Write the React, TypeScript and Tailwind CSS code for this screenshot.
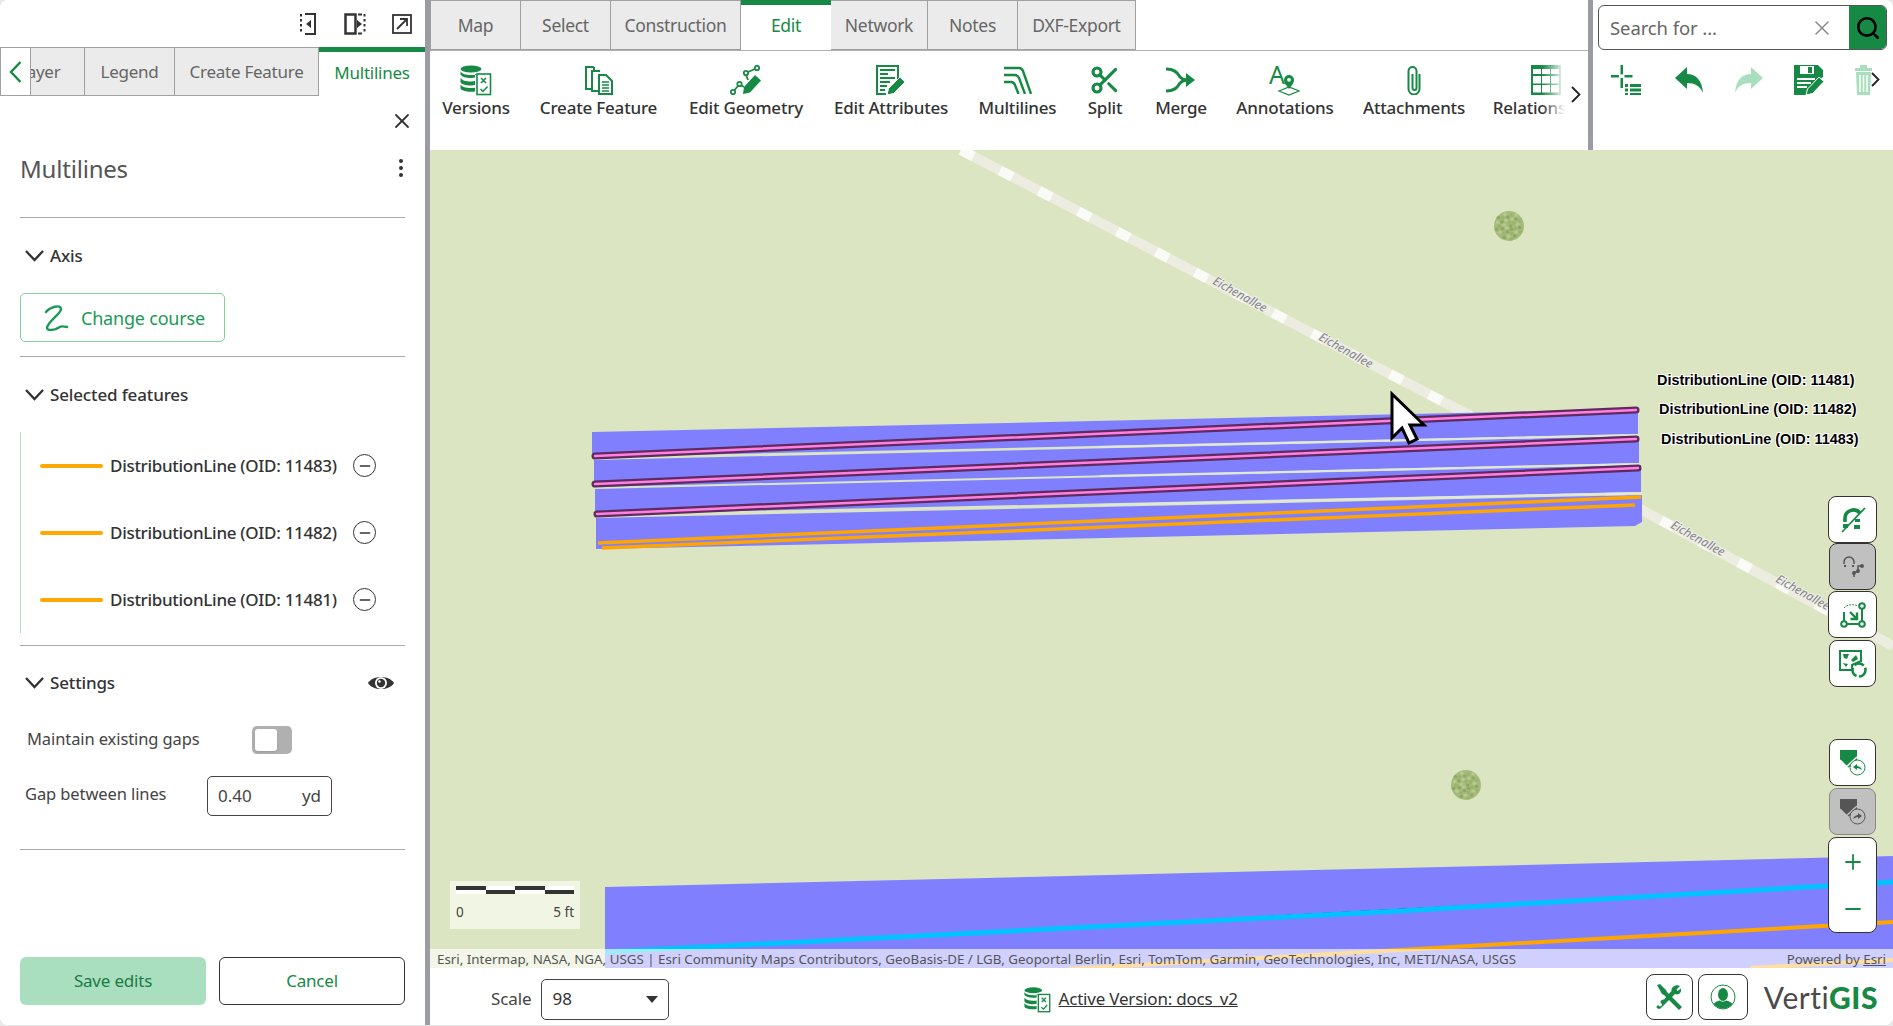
import React from 'react';
import { Scissors, X, Search, Plus, Minus, EllipsisVertical } from 'lucide-react';

const G = '#168a45';

const VersionsIcon = ({ s = 32 }: { s?: number }) => (
  <svg width={s} height={s} viewBox="0 0 32 32">
    <g fill={G}>
      <ellipse cx="11" cy="5" rx="10.5" ry="3.5" />
      <path d="M.5 7.5C2 10 6 11 11 11s7-.6 9-1.8V10H15v3.5c-1 .3-2.5.5-4 .5-5 0-9-1-10.500-3.500zM.5 14c1.500 2.500 5.500 3.500 10.500 3.500 1.500 0 3-.1 4-.4v4c-1 .2-2.500.4-4 .4-5 0-10.500-1.500-10.500-3.500z" />
      <path d="M.5 20.500C2 23 6 24 11 24c1.500 0 3-.1 4-.3v3.700c-1 .2-2.500.3-4 .3-5 0-10.500-1.500-10.500-3.500z" />
    </g>
    <rect x="17" y="10" width="13.500" height="20.500" fill="#fff" stroke={G} strokeWidth="1.600" />
    <path d="M21 14l5 5M26 14l-5 5M20.500 25l2.500 2.500 4.500-5" fill="none" stroke={G} strokeWidth="1.500" />
  </svg>
);

const CreateFeatureIcon = () => (
  <svg width="30" height="30" viewBox="0 0 30 30" fill="none" stroke={G} strokeWidth="2">
    <path d="M9 24H2V2h7l1 1v2" />
    <path d="M15 26H8V6h8" />
    <path d="M15 10h7l6 6v13H15z" fill="#fff" />
    <path d="M18 17h7M18 20h7M18 23h7M18 26h7" strokeWidth="1.600" />
  </svg>
);

const EditGeometryIcon = () => (
  <svg width="32" height="30" viewBox="0 0 32 30" fill="none" stroke={G} strokeWidth="1.800">
    <circle cx="3" cy="27" r="2.200" />
    <circle cx="9.500" cy="19" r="2.200" />
    <circle cx="16" cy="8" r="2.200" />
    <circle cx="27" cy="3" r="2.200" />
    <path d="M4.500 25l3.500-4M11.500 20.500l2.500 1.500M18 7l7-3M16 10l2 5" />
    <path d="M13 29l1-7 11-12 6 5.500-11 12z" fill={G} stroke="none" />
  </svg>
);

const EditAttributesIcon = () => (
  <svg width="30" height="30" viewBox="0 0 30 30" fill="none" stroke={G} strokeWidth="2">
    <path d="M22 14V1H1v28h9" />
    <path d="M4 5h15M4 9h8M4 13h15M4 17h10M4 21h7M4 25h5" strokeWidth="2" />
    <path d="M11 30l1.500-6.500L24 12l5 5-11.500 11.500z" fill={G} stroke="#fff" strokeWidth="1" />
  </svg>
);

const MultilinesIcon = () => (
  <svg width="30" height="28" viewBox="0 0 30 28" fill="none" stroke={G} strokeWidth="2.400">
    <path d="M1 2h15c2 0 3 .6 4 3l8 23" />
    <path d="M1 9h11c2 0 3 .6 4 3l6 16" />
    <path d="M1 16h7c2 0 3 .6 4 3l3.500 9" />
  </svg>
);

const MergeIcon = () => (
  <svg width="32" height="26" viewBox="0 0 32 26" fill="none" stroke={G} strokeWidth="3">
    <path d="M1 2c8 0 11 3 14 8 2 2 3 3 7 3" />
    <path d="M1 24c8 0 11-3 14-8 2-2 3-3 7-3" />
    <path d="M21 6l9 7-9 7z" fill={G} stroke="none" />
  </svg>
);

const AnnotationsIcon = () => (
  <svg width="32" height="32" viewBox="0 0 32 32">
    <text x="0" y="20" fontSize="25" fill={G} fontFamily="Noto Sans, sans-serif">A</text>
    <path d="M20 25c-3-4-5-6-5-9a5 5 0 0 1 10 0c0 3-2 5-5 9z" fill={G} />
    <circle cx="20" cy="15.800" r="1.900" fill="#fff" />
    <path d="M10 27l10-4 10 4-10 4z" fill="none" stroke={G} strokeWidth="1.200" />
  </svg>
);

const PaperclipIcon = () => (
  <svg width="16" height="30" viewBox="0 0 16 30" fill="none" stroke={G} strokeWidth="2">
    <path d="M6.500 9v14a2 2 0 0 0 4 0V6a4 4 0 0 0-8 0v18a5.500 5.500 0 0 0 11 0V9" />
  </svg>
);

const TableIcon = () => (
  <svg width="30" height="30" viewBox="0 0 30 30">
    <rect x="0" y="0" width="30" height="30" fill={G} />
    {[2, 11, 20].map((y) =>
      [2, 11, 20].map((x) => <rect key={`${x}-${y}`} x={x} y={y + (y === 2 ? 2 : 0)} width="8" height={y === 2 ? 5 : 7.500} fill="#fff" />)
    )}
  </svg>
);

const AddListIcon = () => (
  <svg width="30" height="30" viewBox="0 0 30 30" fill={G}>
    <path d="M9.500 0h2.500v9.500H9.500zM9.500 13h2.500v10H9.500zM0 10h8v2.500H0zM13.500 10h8v2.500h-8z" />
    <path d="M14 19h3v3h-3zM19 19h11v3H19zM14 23.500h3v3h-3zM19 23.500h11v3H19zM14 28h3v2h-3zM19 28h11v2H19z" />
  </svg>
);

const ReplyArrow = ({ color, flip }: { color: string; flip?: boolean }) => (
  <svg width="28" height="26" viewBox="0 0 28 26" fill={color} className={flip ? '-scale-x-100' : ''}>
    <path d="M0 11L12 0v7c9 0 15 6 16 19-3-7-8-10-16-10v6z" />
  </svg>
);

const SaveIcon = () => (
  <svg width="30" height="30" viewBox="0 0 30 30">
    <path d="M0 0h24l5 5v7l-3 2-9 12-2 4H0z" fill={G} />
    <rect x="6" y="1" width="14" height="8" fill="#fff" />
    <rect x="14" y="2" width="4" height="6" fill={G} />
    <path d="M3 14h18M3 18h14M3 22h10" stroke="#fff" strokeWidth="1.800" />
    <path d="M12 30l1.500-6L25 12l5 4.500L18.500 28.500z" fill={G} stroke="#fff" strokeWidth="1" />
  </svg>
);

const TrashIcon = () => (
  <svg width="17" height="30" viewBox="0 0 17 30" fill="#a9dfbf">
    <path d="M5 0h7v3h5v3H0V3h5zM1 7h15l-1 23H2z" />
    <path d="M5 10v17M8.500 10v17M12 10v17" stroke="#fff" strokeWidth="1.500" />
  </svg>
);

const ToolsIcon = () => (
  <svg width="26" height="26" viewBox="0 0 26 26" fill={G}>
    <path d="M1 1l3-1 6 6 1 2 15 15-3 3L8 11l-2-1z" />
    <path d="M24 2l-3.500 3.500 1 1.500 3.500-2.500c1 4-2.500 7-6 5.500L5 24c-1.500 1.500-4.500 1-4.500-1.500L2 21l1.500 1.500 2-.5.500-2L4.500 18.500C4 17 6 15.500 8 15.500L15.500 7C15 3 20 0 24 2z" />
  </svg>
);

const PersonIcon = () => (
  <svg width="26" height="26" viewBox="0 0 26 26">
    <circle cx="13" cy="13" r="12" fill="none" stroke={G} strokeWidth="1" />
    <ellipse cx="13" cy="10.500" rx="5" ry="6.500" fill={G} />
    <path d="M3.500 20c2-2.500 4.500-3 6-3.500 2 1.500 4.500 1.500 7 0 1.500.5 4 1 6 3.500-5 6-14 6-19 0z" fill={G} />
  </svg>
);

const Divider = () => <div className="mx-5 h-px shrink-0 bg-[#aaaaaa]" />;

const SectionHead = ({ label, children, className }: { label: string; children?: React.ReactNode; className: string }) => (
  <div className={`flex shrink-0 items-center pl-[25px] pr-[31px] ${className}`}>
    <svg width="19" height="12" viewBox="0 0 19 12" fill="none" stroke="#333" strokeWidth="2.300" className="mr-[6px]">
      <path d="M1 1l8.500 9L18 1" />
    </svg>
    <span className="text-[17px] font-medium tracking-[-0.15px] text-[#333]">{label}</span>
    <div className="ml-auto flex items-center">{children}</div>
  </div>
);

const FeatureRow = ({ oid }: { oid: number }) => (
  <div className="flex h-[67px] items-center">
    <div className="ml-[19px] h-1 w-[63px] rounded-full bg-[#ffa800]" />
    <span className="ml-[7px] w-[243px] whitespace-nowrap text-[17px] font-medium tracking-[-0.3px] text-[#333]">DistributionLine (OID: {oid})</span>
    <div className="flex h-[23px] w-[23px] items-center justify-center rounded-full border border-[#333]">
      <Minus size={16} className="text-[#333]" />
    </div>
  </div>
);

const LeftPanel = () => (
  <div className="flex h-full w-[430px] shrink-0 flex-col border-r-[5px] border-[#9b9ba3] bg-white">
    <div className="flex h-[47px] shrink-0 items-center">
      <svg width="18" height="22" viewBox="0 0 18 22" className="ml-[299px]" fill="none" stroke="#333" strokeWidth="2">
        <path d="M2 1v20" strokeDasharray="2.500 2.500" />
        <path d="M6 1h10v20H6" />
        <path d="M12 7l-5 4 5 4z" fill="#333" stroke="none" />
      </svg>
      <svg width="22" height="22" viewBox="0 0 22 22" className="ml-[27px]" fill="none" stroke="#333" strokeWidth="2.500">
        <rect x="1.500" y="1.500" width="10" height="19" />
        <path d="M13 7l5 4-5 4z" fill="#333" stroke="none" />
        <path d="M20.500 1v20" strokeWidth="2" strokeDasharray="2.500 2.500" />
        <path d="M14 1.500h4M14 20.500h4" strokeWidth="2" />
      </svg>
      <svg width="20" height="20" viewBox="0 0 20 20" className="ml-[26px]" fill="none" stroke="#333" strokeWidth="1.800">
        <rect x="1" y="1" width="18" height="18" />
        <path d="M5 15L14 6M8 5h7v7" />
      </svg>
    </div>
    <div className="flex h-[49px] shrink-0 text-[17px] tracking-[-0.25px] text-[#666]">
      <div className="flex w-[31px] items-center justify-center border border-[#a0a0a0] bg-white">
        <svg width="13" height="22" viewBox="0 0 13 22" fill="none" stroke={G} strokeWidth="2.400">
          <path d="M11.500 1L2 11l9.500 10" />
        </svg>
      </div>
      <div className="flex w-[54px] items-center overflow-hidden border-y border-r border-[#a0a0a0] bg-[#ebebeb] pt-px">
        <span className="-ml-[13px]">Layer</span>
      </div>
      <div className="flex w-[90px] items-center justify-center border-y border-r border-[#a0a0a0] bg-[#ebebeb] pt-px">Legend</div>
      <div className="flex w-[144px] items-center justify-center border-y border-r border-[#a0a0a0] bg-[#ebebeb] pt-px">Create Feature</div>
      <div className="flex w-[106px] items-center justify-center border-t-[5px] border-[#168a45] pb-[3px] text-[#168a45]">Multilines</div>
    </div>
    <div className="flex h-[50px] shrink-0 items-center justify-end pr-[11px]">
      <X size={24} strokeWidth={1.8} className="text-[#333]" />
    </div>
    <div className="flex h-[46px] shrink-0 items-center justify-between pl-[20px] pr-[12px]">
      <span className="text-[24px] tracking-[-0.2px] text-[#555]">Multilines</span>
      <EllipsisVertical size={24} className="-mt-[2px] text-[#333]" />
    </div>
    <div className="h-[25px] shrink-0" />
    <Divider />
    <SectionHead label="Axis" className="h-[75px] pt-px" />
    <div className="ml-5 flex h-[49px] w-[205px] shrink-0 items-center self-start rounded-[5px] border border-[#80d0a0]">
      <svg width="26" height="26" viewBox="0 0 26 26" className="ml-[23px]" fill="none" stroke="#1a9a55" strokeWidth="2.400" strokeLinecap="round">
        <path d="M2 7C6 2 17-1 17 4c0 5-14 13-14 19 0 3 8 2 11 0 3-2 4-2 9-1" />
      </svg>
      <span className="ml-[11px] pt-px text-[18px] tracking-[-0.2px] text-[#1a9a55]">Change course</span>
    </div>
    <div className="h-[14px] shrink-0" />
    <Divider />
    <SectionHead label="Selected features" className="h-[75px]" />
    <div className="ml-5 shrink-0 border-l border-[#b5dfc5]">
      <FeatureRow oid={11483} />
      <FeatureRow oid={11482} />
      <FeatureRow oid={11481} />
    </div>
    <div className="h-[12px] shrink-0" />
    <Divider />
    <SectionHead label="Settings" className="h-[74px]">
      <svg width="26" height="16" viewBox="0 0 26 16">
        <path d="M0 8C5 0 21 0 26 8 21 16 5 16 0 8z" fill="#333" />
        <circle cx="13" cy="8" r="6" fill="#fff" />
        <circle cx="13" cy="8" r="4.200" fill="#333" />
        <circle cx="11.500" cy="6.500" r="1.200" fill="#fff" />
      </svg>
    </SectionHead>
    <div className="mt-[6px] flex h-[28px] shrink-0 items-center">
      <span className="ml-[27px] w-[225px] pb-[2px] text-[16.5px] tracking-[-0.1px] text-[#444]">Maintain existing gaps</span>
      <div className="h-[28px] w-[40px] rounded-[5px] bg-[#b0b0b0] p-[3px]">
        <div className="h-[22px] w-[22px] rounded-[3px] bg-white shadow" />
      </div>
    </div>
    <div className="mt-[22px] flex h-[40px] shrink-0">
      <span className="ml-[25px] w-[182px] text-[16.5px] leading-[36px] tracking-[-0.1px] text-[#444]">Gap between lines</span>
      <div className="flex h-[40px] w-[125px] items-center justify-between rounded-[5px] border border-[#444] px-[10px] text-[17px] text-[#444]">
        <span>0.40</span>
        <span>yd</span>
      </div>
    </div>
    <div className="h-[33px] shrink-0" />
    <Divider />
    <div className="flex-1" />
    <div className="mb-[20px] flex h-[48px] shrink-0 justify-between px-5 text-[17px] tracking-[-0.2px]">
      <div className="flex w-[186px] items-center justify-center rounded-[6px] bg-[#a9dfbf] text-[#1b7a45]">Save edits</div>
      <div className="flex w-[186px] items-center justify-center rounded-[6px] border border-[#333] text-[#168a45]">Cancel</div>
    </div>
  </div>
);

const TopTab = ({ label, w, active }: { label: string; w: string; active?: boolean }) =>
  active ? (
    <div className={`flex items-center justify-center border-t-[5px] border-[#168a45] pb-1 text-[#168a45] ${w}`}>{label}</div>
  ) : (
    <div className={`flex items-center justify-center border-y border-r border-[#a0a0a0] bg-[#ebebeb] text-[#666] ${w}`}>{label}</div>
  );

const RibbonItem = ({ label, cx, children }: { label: string; cx: string; children: React.ReactNode }) => (
  <div className={`flex shrink-0 flex-col items-center ${cx}`}>
    <div className="flex h-[34px] items-center justify-center">{children}</div>
    <span className="-mt-[2px] whitespace-nowrap text-[17px] font-medium tracking-[-0.2px] text-[#333]">{label}</span>
  </div>
);

const TopBar = () => (
  <div className="flex h-[150px] shrink-0">
    <div className="flex w-[1158px] shrink-0 flex-col">
      <div className="flex h-[51px] shrink-0 border-b border-[#b0b0b0] text-[17.5px] tracking-[-0.3px]">
        <div className="flex">
          <div className="w-px bg-[#a0a0a0]" />
          <TopTab label="Map" w="w-[90px]" />
          <TopTab label="Select" w="w-[90px]" />
          <TopTab label="Construction" w="w-[130px]" />
          <TopTab label="Edit" w="w-[90px]" active />
          <TopTab label="Network" w="w-[97px]" />
          <TopTab label="Notes" w="w-[90px]" />
          <TopTab label="DXF-Export" w="w-[118px]" />
        </div>
      </div>
      <div className="relative flex h-[99px] items-start overflow-hidden pt-[12px]">
        <RibbonItem label="Versions" cx="w-[90px] ml-[1px]"><VersionsIcon /></RibbonItem>
        <RibbonItem label="Create Feature" cx="w-[155px]"><CreateFeatureIcon /></RibbonItem>
        <RibbonItem label="Edit Geometry" cx="w-[140px]"><EditGeometryIcon /></RibbonItem>
        <RibbonItem label="Edit Attributes" cx="w-[150px]"><EditAttributesIcon /></RibbonItem>
        <RibbonItem label="Multilines" cx="w-[103px]"><MultilinesIcon /></RibbonItem>
        <RibbonItem label="Split" cx="w-[72px]"><Scissors size={32} color={G} strokeWidth={2.3} /></RibbonItem>
        <RibbonItem label="Merge" cx="w-[80px]"><MergeIcon /></RibbonItem>
        <RibbonItem label="Annotations" cx="w-[128px]"><AnnotationsIcon /></RibbonItem>
        <RibbonItem label="Attachments" cx="w-[130px]"><PaperclipIcon /></RibbonItem>
        <RibbonItem label="Relationships" cx="w-[120px] ml-[7px]"><TableIcon /></RibbonItem>
        <div className="absolute right-0 top-0 flex h-full w-[46px] items-start bg-gradient-to-r from-transparent via-white to-white">
          <svg width="10" height="17" viewBox="0 0 10 17" fill="none" stroke="#222" strokeWidth="1.800" className="ml-[29px] mt-[35px]">
            <path d="M1 1l7.500 7.500L1 16" />
          </svg>
        </div>
      </div>
    </div>
    <div className="w-[5px] shrink-0 bg-[#9b9ba3]" />
    <div className="flex min-w-0 flex-1 flex-col">
      <div className="ml-[5px] mt-[5px] flex h-[45px] w-[289px] overflow-hidden rounded-[6px] border border-[#555]">
        <span className="ml-[11px] self-center text-[18.5px] tracking-[-0.1px] text-[#666]">Search for ...</span>
        <X size={24} strokeWidth={1.5} className="ml-auto mr-[15px] self-center text-[#888]" />
        <div className="flex w-[37px] items-center justify-center bg-[#168a45]">
          <Search size={26} strokeWidth={2.4} className="text-black" />
        </div>
      </div>
      <div className="relative mt-[15px] flex h-[30px] items-center pl-[18px]">
        <AddListIcon />
        <div className="ml-[34px]"><ReplyArrow color={G} /></div>
        <div className="ml-[32px]"><ReplyArrow color="#a9dfbf" flip /></div>
        <div className="ml-[31px]"><SaveIcon /></div>
        <div className="ml-[31px]"><TrashIcon /></div>
        <svg width="9" height="15" viewBox="0 0 9 15" fill="none" stroke="#222" strokeWidth="1.800" className="absolute left-[278px] top-[7px]">
          <path d="M1 1l6.500 6.500L1 14" />
        </svg>
      </div>
    </div>
  </div>
);

const Cursor = () => (
  <path d="M1392 394V438L1402 428 1409 443 1417 439 1410 425H1424Z" fill="#fff" stroke="#000" strokeWidth="3" />
);

const labels = [
  { t: 11481, x: 1657, y: 385 },
  { t: 11482, x: 1659, y: 414 },
  { t: 11483, x: 1661, y: 444 },
];

const roadLabels = [
  { x: 1238, y: 298 },
  { x: 1344, y: 354 },
  { x: 1696, y: 542 },
  { x: 1801, y: 596 },
];

const bands = [
  '592,432 1638,409 1638,434 592,457',
  '594,460 1639,436 1639,463 594,487',
  '595,489 1641,465 1641,492 595,514',
  '596,518 1642,495 1642,522 1635,526 835,544 596,549',
];

const pink = [
  '595,456 1636,410',
  '595,484 1636,439',
  '597,514 1638,468',
];

// fixed dot spread so the tree crown looks mottled
const crownDots = Array.from({ length: 34 }, (_, i) => {
  const a = i * 2.4;
  const r = 13.5 * Math.sqrt((i + 0.5) / 34);
  return { dx: r * Math.cos(a), dy: r * Math.sin(a), fill: ['#8fa764', '#b6c991', '#9cb26f'][i % 3] };
});

const Tree = ({ x, y }: { x: number; y: number }) => (
  <g>
    <circle cx={x} cy={y} r="15" fill="#a5bb7c" />
    {crownDots.map((d, i) => (
      <circle key={i} cx={x + d.dx} cy={y + d.dy} r="1.800" fill={d.fill} />
    ))}
  </g>
);

const ROAD = 'M961 150L1461 411L1642 510L1893 646';

const MapDrawing = () => (
  <svg viewBox="430 150 1463 818" className="absolute inset-0 h-full w-full">
    <rect x="430" y="150" width="1463" height="818" fill="#dce5c1" />
    <path d={ROAD} stroke="#ecece0" strokeWidth="10" fill="none" />
    <path d={ROAD} stroke="#fafaf6" strokeWidth="10" strokeDasharray="14 30" fill="none" />
    <Tree x={1509} y={226} />
    <Tree x={1466} y={785} />
    {roadLabels.map((l) => (
      <text
        key={l.x}
        x={l.x}
        y={l.y}
        transform={`rotate(29 ${l.x} ${l.y})`}
        textAnchor="middle"
        fontSize="12"
        fontStyle="italic"
        fill="#85858c"
        stroke="#eeeee6"
        strokeWidth="2"
        paintOrder="stroke"
        fontFamily="Noto Sans, sans-serif"
      >
        Eichenallee
      </text>
    ))}
    {bands.map((p) => (
      <polygon key={p} points={p} fill="#8080ff" />
    ))}
    <path d="M1100 447L1639 435M1100 476L1641 464M1100 505L1642 493" stroke="#e2e9d2" strokeWidth="2" />
    {pink.map((p) => (
      <g key={p}>
        <polyline points={p} stroke="#5f2a5f" strokeWidth="7" strokeLinecap="round" fill="none" />
        <polyline points={p} stroke="#ff80e0" strokeWidth="2.500" strokeLinecap="round" fill="none" />
      </g>
    ))}
    <path d="M598 543L1641 497M602 548L1635 505" stroke="#ffa500" strokeWidth="3.500" />
    <polygon points="605,887 1400,868 1893,856 1893,968 605,968" fill="#8080ff" />
    <path d="M605 952L1400 911L1893 882" stroke="#00c3ff" strokeWidth="5" />
    <path d="M1068 969L1400 950L1893 922" stroke="#ffa500" strokeWidth="4" />
    <path d="M1750 968L1893 960" stroke="#ffa500" strokeWidth="4" />
    <Cursor />
    {labels.map((l) => (
      <text
        key={l.t}
        x={l.x}
        y={l.y}
        fontSize="14.400"
        fontWeight="700"
        fill="#000"
        stroke="#fff"
        strokeWidth="2"
        paintOrder="stroke"
        fontFamily="Liberation Sans, sans-serif"
      >
        DistributionLine (OID: {l.t})
      </text>
    ))}
  </svg>
);

const MapButton = ({ children, tone, w }: { children?: React.ReactNode; tone?: string; w?: string }) => (
  <div className={`flex h-[47px] items-center justify-center rounded-[8px] border border-[#333] ${tone ?? 'bg-white'} ${w ?? 'w-[49px]'}`}>
    {children}
  </div>
);

const SwipeIcon = ({ dark }: { dark?: boolean }) => {
  const c = dark ? '#555' : G;
  return (
    <svg width="26" height="26" viewBox="0 0 26 26">
      <path d="M0 0h17v10L8 18 0 10z" fill={c} />
      <path d="M0 10l10 10M5 18L17 7" stroke={dark ? '#c0c0c0' : '#fff'} strokeWidth="1.500" />
      <circle cx="17.500" cy="17.500" r="7.500" fill={dark ? '#c0c0c0' : '#fff'} stroke={c} strokeWidth="1" />
      {dark ? <path d="M13 20c1-3 3-4 5-4v-2l4 3-4 3v-2c-2 0-3 1-5 2z" fill={c} /> : <path d="M22 20c-1-3-3-4-5-4v-2l-4 3 4 3v-2c2 0 3 1 5 2z" fill={c} />}
    </svg>
  );
};

const MapButtons = () => (
  <div className="absolute right-[16px] top-[346px] flex w-[49px] flex-col items-center">
    <MapButton>
      <svg width="26" height="26" viewBox="0 0 26 26" fill="none" stroke={G} strokeWidth="3.600">
        <path d="M5 15v-3a8.500 8.500 0 0 1 15-6" />
        <path d="M2 25L25 1" strokeWidth="1.800" />
        <path d="M15 12h5v3h-5zM14 18h6v4h-6zM3 17h5v4H3z" fill={G} stroke="none" />
      </svg>
    </MapButton>
    <MapButton tone="bg-[#c0c0c0]" w="w-[47px]">
      <svg width="22" height="24" viewBox="0 0 22 24" fill="none" stroke="#555" strokeWidth="1.500">
        <path d="M2 9V7a5 5 0 0 1 10 0v2" />
        <path d="M2 11h2M10 11h2" strokeWidth="2" />
        <path d="M12 22v-5h4v-6h4" />
        <circle cx="12" cy="18" r="1.200" fill="#555" />
        <circle cx="16" cy="16" r="1.200" fill="#555" />
        <circle cx="20" cy="11" r="1.200" fill="#555" />
      </svg>
    </MapButton>
    <div className="mt-[1px]">
      <MapButton>
        <svg width="26" height="26" viewBox="0 0 26 26" fill="none" stroke={G} strokeWidth="2">
          <path d="M22 6v15M5 22h15M4 10v10" />
          <path d="M4 6c3-4 10-4 14-2" strokeWidth="0.900" strokeDasharray="2 1" />
          <path d="M10 10l7 7M17 10.500V17h-6.500" strokeWidth="2.400" />
          <circle cx="22" cy="4" r="2.800" fill="#fff" />
          <circle cx="22" cy="22" r="2.800" fill="#fff" />
          <circle cx="4" cy="22" r="2.800" fill="#fff" />
        </svg>
      </MapButton>
    </div>
    <div className="mt-[2px]">
      <MapButton w="w-[47px]">
        <svg width="28" height="28" viewBox="0 0 28 28" fill="none" stroke={G}>
          <path d="M1 1h21v10l-9 4v5H1z" strokeWidth="2" />
          <path d="M4 4h6l-2 5-3-1zM12 10l5-5 2 4-5 3zM4 13l5 1-2 3z" fill={G} stroke="none" />
          <circle cx="20" cy="20" r="6.500" strokeWidth="2.600" strokeDasharray="10 2.500" />
        </svg>
      </MapButton>
    </div>
    <div className="mt-[52px]">
      <MapButton w="w-[47px]"><SwipeIcon /></MapButton>
    </div>
    <div className="mt-[2px]">
      <MapButton tone="bg-[#c0c0c0] border-[#888]" w="w-[47px]"><SwipeIcon dark /></MapButton>
    </div>
    <div className="mt-[2px] flex h-[96px] w-[49px] flex-col items-center justify-around rounded-[8px] border border-[#333] bg-white">
      <Plus size={24} color={G} strokeWidth={1.8} />
      <Minus size={24} color={G} strokeWidth={1.8} />
    </div>
  </div>
);

const ScaleBar = () => (
  <div className="absolute left-[20px] top-[731px] h-[48px] w-[130px] bg-[#f3f6e8]/90 px-[6px] pt-[5px]">
    <div className="grid h-[8px] grid-cols-4 grid-rows-2">
      <div className="bg-[#333]" />
      <div className="bg-white" />
      <div className="bg-[#333]" />
      <div className="bg-white" />
      <div className="bg-white" />
      <div className="bg-[#333]" />
      <div className="bg-white" />
      <div className="bg-[#333]" />
    </div>
    <div className="mt-[9px] flex justify-between text-[13.5px] leading-[18px] text-[#444]">
      <span>0</span>
      <span>5 ft</span>
    </div>
  </div>
);

const Attribution = () => (
  <div className="absolute inset-x-0 bottom-0 flex h-[19px] items-center justify-between bg-white/[0.63] px-[7px] pt-px text-[13.35px] leading-[19px] text-[#555]">
    <span className="whitespace-nowrap">Esri, Intermap, NASA, NGA, USGS | Esri Community Maps Contributors, GeoBasis-DE / LGB, Geoportal Berlin, Esri, TomTom, Garmin, GeoTechnologies, Inc, METI/NASA, USGS</span>
    <span className="whitespace-nowrap">Powered by <span className="underline">Esri</span></span>
  </div>
);

const BottomBar = () => (
  <div className="relative flex h-[57px] shrink-0 items-center bg-white pt-[5px]">
    <span className="ml-[61px] text-[17px] tracking-[-0.1px] text-[#444]">Scale</span>
    <div className="ml-[9px] flex h-[41px] w-[128px] items-center justify-between rounded-[5px] border border-[#444] pl-[11px] pr-[10px] text-[17px] text-[#333]">
      <span>98</span>
      <div className="h-0 w-0 border-x-[6px] border-t-[7px] border-x-transparent border-t-[#333]" />
    </div>
    <div className="ml-[355px] flex items-center">
      <VersionsIcon s={27} />
      <span className="ml-[8px] text-[17px] tracking-[-0.2px] text-[#333] underline">Active Version: docs_v2</span>
    </div>
    <div className="mb-[5px] ml-[408px] flex h-[46px] w-[47px] items-center justify-center rounded-[8px] border border-[#333]"><ToolsIcon /></div>
    <div className="mb-[5px] ml-[5px] flex h-[46px] w-[50px] items-center justify-center rounded-[8px] border border-[#333]"><PersonIcon /></div>
    <div className="mb-[5px] ml-[16px] whitespace-nowrap font-['Lato',sans-serif] text-[30px] leading-none tracking-[0.5px] text-[#4a4a4a]">
      Verti<span className="font-black text-[#168a45]">GIS</span>
    </div>
  </div>
);

export default function App() {
  return (
    <div className="h-screen w-full overflow-hidden bg-[#e8e8e8] pb-px font-['Noto_Sans',sans-serif]">
      <div className="flex h-full overflow-hidden rounded-[8px] bg-white">
        <LeftPanel />
        <div className="flex min-w-0 flex-1 flex-col">
          <TopBar />
          <div className="relative min-h-0 flex-1 overflow-hidden">
            <MapDrawing />
            <ScaleBar />
            <MapButtons />
            <Attribution />
          </div>
          <BottomBar />
        </div>
      </div>
    </div>
  );
}
